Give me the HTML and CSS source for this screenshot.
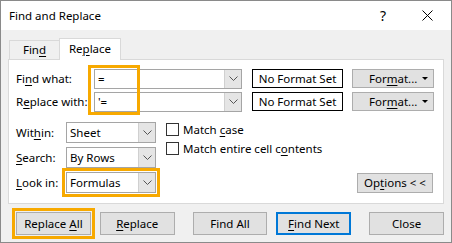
FILE: index.html
```html
<!DOCTYPE html>
<html>
  <head>
    <title>Find and Replace</title>
    <link rel="stylesheet" href="styles.css">
  </head>
  <body>
    <div class="window">
      <div class="titlebar">
        <span class="title">Find and Replace</span>
        <span class="help">?</span>
        <svg class="close-x" width="11" height="11" viewBox="0 0 11 11">
          <path d="M0.5 0.5 L10.5 10.5 M10.5 0.5 L0.5 10.5" stroke="#000" stroke-width="1" fill="none" />
        </svg>
      </div>

      <div class="content">
        <div class="tabs">
          <div class="tab">Fin<u>d</u></div>
          <div class="tab active">Re<u>p</u>lace</div>
        </div>

        <div class="panel">
          <div class="fr-row">
            <span class="fr-label">Fi<u>n</u>d what:</span>
            <div class="combo">
              <span class="combo-text">=</span>
              <span class="combo-btn">
                <svg width="9" height="5" viewBox="0 0 9 5"><path d="M0.5 0.5 L4.5 4.5 L8.5 0.5" stroke="#555" fill="none" /></svg>
              </span>
            </div>
            <div class="fmt-box">No Format Set</div>
            <div class="btn fmt-btn"><span>For<u>m</u>at...</span><span class="caret"></span></div>
          </div>
          <div class="fr-row">
            <span class="fr-label">R<u>e</u>place with:</span>
            <div class="combo">
              <span class="combo-text">'=</span>
              <span class="combo-btn">
                <svg width="9" height="5" viewBox="0 0 9 5"><path d="M0.5 0.5 L4.5 4.5 L8.5 0.5" stroke="#555" fill="none" /></svg>
              </span>
            </div>
            <div class="fmt-box">No Format Set</div>
            <div class="btn fmt-btn"><span>For<u>m</u>at...</span><span class="caret"></span></div>
          </div>

          <!-- annotation box round the two values -->
          <div class="mark-values"></div>

          <div class="lower">
            <div class="opts">
              <div class="opt-row">
                <span class="opt-label">Wit<u>h</u>in:</span>
                <div class="select">
                  <span class="select-text">Sheet</span>
                  <span class="select-btn">
                    <svg width="9" height="5" viewBox="0 0 9 5"><path d="M0.5 0.5 L4.5 4.5 L8.5 0.5" stroke="#555" fill="none" /></svg>
                  </span>
                </div>
              </div>
              <div class="opt-row">
                <span class="opt-label"><u>S</u>earch:</span>
                <div class="select">
                  <span class="select-text">By Rows</span>
                  <span class="select-btn">
                    <svg width="9" height="5" viewBox="0 0 9 5"><path d="M0.5 0.5 L4.5 4.5 L8.5 0.5" stroke="#555" fill="none" /></svg>
                  </span>
                </div>
              </div>
              <div class="opt-row">
                <span class="opt-label"><u>L</u>ook in:</span>
                <div class="select marked">
                  <span class="select-text">Formulas</span>
                  <span class="select-btn">
                    <svg width="9" height="5" viewBox="0 0 9 5"><path d="M0.5 0.5 L4.5 4.5 L8.5 0.5" stroke="#555" fill="none" /></svg>
                  </span>
                </div>
              </div>
            </div>

            <div class="checks">
              <div class="check-row"><span class="box"></span><span>Match <u>c</u>ase</span></div>
              <div class="check-row"><span class="box"></span><span>Match entire cell c<u>o</u>ntents</span></div>
            </div>

            <div class="btn options-btn">Op<u>t</u>ions &lt; &lt;</div>
          </div>
        </div>

        <div class="actions">
          <div class="btn action marked">Replace <u>A</u>ll</div>
          <div class="btn action"><u>R</u>eplace</div>
          <div class="btn action wide-gap">Find All</div>
          <div class="btn action default"><u>F</u>ind Next</div>
          <div class="btn action wide-gap">Close</div>
        </div>
      </div>
    </div>
  </body>
</html>
```

FILE: styles.css
```css
body {
  margin: 0;
  font-family: "Noto Sans", sans-serif;
  font-size: 11.5px;
  color: #000;
}
u {
  text-decoration-thickness: 1px;
  text-underline-offset: 2px;
}
.window {
  width: 452px;
  height: 243px;
  box-sizing: border-box;
  border: 1px solid #8a8a8a;
  background-color: #f0f0f0;
}
.titlebar {
  height: 29px;
  background-color: #fff;
  display: flex;
  align-items: center;
  padding: 0 18px 0 8px;
}
.help {
  margin-left: auto;
  margin-right: 36px;
  font-size: 14px;
}
.content {
  padding: 8px 7px 0 7px;
}
.tabs {
  display: flex;
  align-items: flex-end;
  height: 22px;
  padding-left: 1px;
  margin-bottom: -1px;
  position: relative;
  z-index: 1;
}
.tab {
  box-sizing: border-box;
  width: 50px;
  height: 19px;
  margin-bottom: 1px;
  border: 1px solid #d9d9d9;
  border-bottom: none;
  border-right: none;
  text-align: center;
  line-height: 18px;
}
.tab.active {
  width: 62px;
  height: 22px;
  margin-bottom: 0;
  border-right: 1px solid #d9d9d9;
  background-color: #fff;
  line-height: 20px;
}
.panel {
  position: relative;
  background-color: #fff;
  border: 1px solid #d9d9d9;
  padding: 8px 8px 10px 7px;
}
.fr-row {
  display: flex;
  align-items: center;
  height: 21px;
}
.fr-row + .fr-row {
  margin-top: 2px;
}
.fr-label {
  width: 78px;
  white-space: nowrap;
}
.combo {
  box-sizing: border-box;
  width: 148px;
  height: 20px;
  border: 1px solid #a5a5a5;
  display: flex;
}
.combo-text,
.select-text {
  flex: 1;
  padding-left: 3px;
  line-height: 18px;
}
.combo-btn,
.select-btn {
  width: 16px;
  background-color: #e5e5e5;
  border-left: 1px solid #d0d0d0;
  display: flex;
  align-items: center;
  justify-content: center;
}
.fmt-box {
  box-sizing: border-box;
  margin-left: 10px;
  width: 91px;
  height: 19px;
  border: 1px solid #000;
  text-align: center;
  line-height: 17px;
}
.btn {
  box-sizing: border-box;
  background-color: #e1e1e1;
  border: 1px solid #adadad;
  text-align: center;
  white-space: nowrap;
}
.fmt-btn {
  margin-left: 9px;
  width: 82px;
  height: 19px;
  line-height: 17px;
  display: flex;
  align-items: center;
  padding: 0 5px 0 16px;
}
.caret {
  margin-left: auto;
  width: 0;
  height: 0;
  border-left: 3px solid transparent;
  border-right: 3px solid transparent;
  border-top: 3px solid #000;
}
.mark-values {
  position: absolute;
  left: 79px;
  top: 5px;
  width: 52px;
  height: 50px;
  box-sizing: border-box;
  border: 3px solid #f7a900;
}
.lower {
  display: flex;
  margin-top: 10px;
}
.opt-row {
  display: flex;
  align-items: center;
  height: 21px;
}
.opt-row + .opt-row {
  margin-top: 4px;
}
.opt-label {
  width: 50px;
}
.select {
  box-sizing: border-box;
  width: 90px;
  height: 21px;
  border: 1px solid #a5a5a5;
  display: flex;
}
.select .select-text {
  line-height: 19px;
}
.marked {
  outline: 3px solid #f7a900;
  outline-offset: 1px;
}
.checks {
  margin-left: 10px;
  padding-top: 1px;
}
.check-row {
  display: flex;
  align-items: center;
  height: 13px;
  white-space: nowrap;
}
.check-row + .check-row {
  margin-top: 6px;
}
.box {
  box-sizing: border-box;
  width: 13px;
  height: 13px;
  border: 1px solid #333;
  background-color: #fff;
  margin-right: 4px;
}
.options-btn {
  margin-left: auto;
  margin-right: 2px;
  align-self: flex-end;
  width: 76px;
  height: 20px;
  line-height: 18px;
}
.actions {
  display: flex;
  margin-top: 8px;
  padding-left: 8px;
}
.action {
  width: 75px;
  height: 23px;
  line-height: 21px;
  margin-left: 9px;
}
.action:first-child {
  margin-left: 0;
}
.action.wide-gap {
  margin-left: 18px;
}
.action.default {
  border: 2px solid #0078d7;
  line-height: 19px;
}
```
